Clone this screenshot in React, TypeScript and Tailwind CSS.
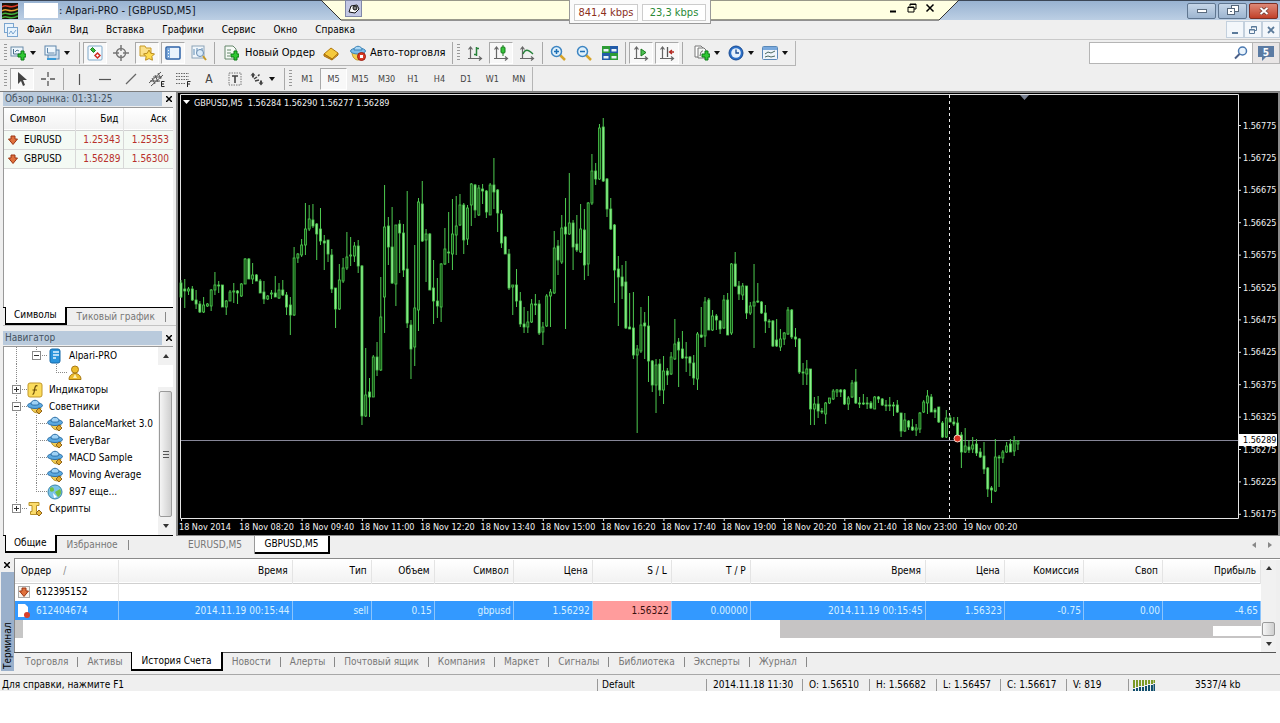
import type { ReactNode } from 'react';
import clsx from 'clsx';

type Candle = [number, number, number, number, 0 | 1];

// high, body top, body bottom, low, rising
const candles: Candle[] = [
  [280, 283, 297, 298, 0], [279, 289, 291, 308, 0], [287, 289, 291, 295, 1], [286, 289, 300, 301, 0], [290, 300, 304, 309, 0],
  [301, 304, 312, 313, 0], [297, 305, 312, 313, 1], [303, 304, 306, 307, 1], [289, 290, 306, 311, 1], [272, 285, 290, 295, 1],
  [281, 285, 286, 293, 0], [285, 285, 307, 307, 0], [300, 301, 307, 315, 1], [290, 292, 301, 301, 1], [283, 291, 292, 303, 1],
  [290, 291, 293, 304, 0], [283, 284, 296, 297, 1], [258, 259, 284, 284, 1], [258, 259, 279, 279, 0], [263, 275, 279, 284, 1],
  [274, 275, 281, 281, 0], [279, 281, 293, 293, 0], [281, 292, 299, 304, 0], [295, 296, 299, 300, 1], [290, 293, 294, 299, 1],
  [276, 293, 297, 297, 0], [283, 290, 298, 299, 1], [280, 290, 295, 296, 0], [292, 295, 307, 315, 0], [297, 305, 315, 335, 0],
  [247, 258, 315, 316, 1], [253, 254, 258, 263, 1], [239, 245, 255, 257, 1], [203, 229, 245, 255, 1], [205, 219, 229, 231, 1],
  [204, 220, 226, 228, 0], [223, 224, 234, 260, 0], [208, 229, 241, 245, 0], [235, 241, 243, 270, 0], [240, 240, 254, 262, 0],
  [249, 255, 289, 293, 0], [288, 288, 309, 328, 0], [264, 280, 309, 310, 1], [258, 268, 281, 283, 1], [232, 257, 268, 270, 1],
  [237, 255, 256, 266, 1], [242, 246, 256, 262, 1], [240, 246, 266, 273, 0], [265, 266, 416, 425, 0], [348, 395, 416, 417, 1],
  [378, 392, 397, 417, 0], [355, 357, 397, 397, 1], [342, 357, 370, 376, 0], [277, 317, 370, 371, 1], [185, 227, 297, 333, 1],
  [217, 226, 247, 265, 0], [207, 247, 283, 284, 0], [225, 225, 284, 306, 1], [220, 224, 233, 273, 0], [224, 233, 270, 277, 0],
  [191, 269, 323, 328, 0], [320, 325, 349, 379, 0], [245, 308, 347, 366, 1], [198, 202, 310, 331, 1], [181, 204, 241, 242, 0],
  [229, 234, 240, 282, 1], [233, 234, 290, 290, 0], [260, 288, 301, 324, 0], [278, 301, 306, 318, 0], [263, 264, 307, 322, 1],
  [228, 249, 264, 265, 1], [212, 252, 253, 263, 0], [199, 234, 254, 270, 1], [196, 226, 235, 255, 1], [194, 205, 225, 226, 1],
  [203, 205, 240, 254, 0], [205, 208, 239, 245, 1], [183, 184, 205, 226, 1], [184, 185, 210, 218, 0], [185, 188, 215, 216, 1],
  [184, 189, 191, 204, 0], [190, 191, 212, 218, 0], [183, 185, 215, 215, 1], [158, 185, 192, 209, 0], [189, 190, 213, 232, 0],
  [210, 214, 243, 248, 0], [236, 237, 254, 254, 0], [249, 254, 288, 290, 0], [285, 285, 287, 315, 1], [269, 285, 301, 307, 0],
  [292, 301, 324, 327, 0], [307, 324, 327, 333, 0], [311, 322, 327, 333, 1], [299, 304, 322, 323, 1], [294, 304, 305, 315, 0],
  [300, 304, 333, 335, 0], [322, 327, 332, 345, 1], [294, 296, 326, 327, 1], [289, 292, 296, 327, 1], [231, 248, 293, 294, 1],
  [240, 246, 260, 275, 0], [215, 228, 262, 264, 1], [198, 227, 234, 329, 0], [173, 223, 234, 235, 1], [220, 223, 247, 270, 0],
  [215, 244, 250, 252, 0], [204, 229, 252, 253, 1], [209, 230, 265, 280, 0], [202, 203, 264, 276, 1], [154, 171, 203, 205, 1],
  [163, 171, 179, 185, 0], [124, 128, 179, 180, 1], [118, 127, 181, 182, 0], [178, 179, 209, 217, 0], [198, 209, 229, 230, 0],
  [224, 225, 270, 303, 0], [256, 269, 277, 326, 0], [265, 277, 286, 299, 0], [261, 282, 328, 329, 0], [293, 327, 329, 329, 0],
  [292, 328, 355, 359, 0], [345, 349, 355, 433, 1], [307, 325, 351, 353, 1], [312, 323, 326, 359, 0], [296, 326, 361, 382, 0],
  [360, 361, 385, 392, 0], [359, 365, 385, 413, 1], [359, 364, 390, 396, 0], [356, 371, 390, 404, 1], [368, 371, 375, 385, 0],
  [352, 357, 374, 375, 1], [319, 344, 359, 360, 1], [338, 342, 350, 387, 0], [331, 349, 358, 359, 0], [342, 357, 358, 372, 0],
  [356, 357, 363, 376, 0], [355, 363, 378, 385, 0], [332, 334, 379, 390, 1], [307, 335, 337, 338, 0], [297, 302, 336, 347, 1],
  [298, 300, 330, 330, 0], [310, 316, 330, 331, 1], [314, 316, 320, 330, 0], [320, 321, 329, 334, 0], [295, 300, 328, 329, 1],
  [293, 300, 335, 335, 0], [263, 264, 333, 335, 1], [252, 264, 286, 287, 0], [281, 286, 294, 300, 0], [283, 286, 295, 300, 1],
  [286, 286, 313, 319, 0], [302, 306, 313, 315, 1], [264, 302, 306, 348, 1], [283, 301, 302, 303, 0], [301, 302, 313, 314, 0],
  [305, 313, 321, 333, 0], [319, 321, 322, 328, 0], [320, 321, 346, 347, 0], [319, 340, 346, 347, 0], [329, 339, 347, 351, 1],
  [332, 333, 339, 345, 1], [307, 310, 334, 335, 1], [309, 310, 337, 339, 0], [328, 337, 339, 347, 0], [338, 339, 372, 374, 0],
  [363, 372, 373, 385, 0], [360, 369, 374, 385, 1], [369, 369, 409, 425, 0], [397, 404, 409, 425, 1], [396, 404, 411, 418, 0],
  [408, 411, 412, 414, 0], [402, 403, 414, 424, 1], [398, 398, 403, 404, 1], [389, 391, 399, 400, 1], [389, 390, 392, 397, 1],
  [389, 390, 392, 397, 0], [389, 390, 404, 405, 0], [396, 398, 404, 410, 1], [380, 383, 397, 398, 1], [369, 382, 403, 404, 0],
  [397, 403, 404, 408, 0], [394, 403, 404, 405, 0], [397, 403, 404, 409, 0], [401, 403, 408, 409, 0], [396, 397, 409, 409, 1],
  [396, 397, 399, 403, 0], [398, 399, 405, 406, 0], [400, 405, 406, 411, 0], [397, 405, 406, 411, 0], [402, 405, 406, 416, 0],
  [400, 405, 412, 413, 0], [413, 413, 431, 437, 0], [413, 420, 431, 432, 1], [420, 421, 427, 430, 0], [419, 427, 430, 431, 0],
  [424, 428, 430, 436, 1], [412, 413, 429, 433, 1], [400, 402, 412, 413, 1], [390, 396, 403, 414, 1], [394, 397, 412, 412, 0],
  [408, 410, 412, 418, 0], [407, 407, 422, 423, 0], [421, 423, 437, 438, 0], [410, 418, 437, 438, 1], [415, 418, 422, 422, 0],
  [417, 422, 424, 426, 0], [417, 423, 437, 440, 0], [432, 435, 452, 468, 0], [428, 446, 452, 453, 1], [440, 447, 450, 453, 0],
  [437, 445, 449, 453, 1], [439, 444, 453, 456, 0], [448, 452, 457, 458, 0], [442, 456, 469, 474, 0], [467, 468, 489, 497, 0],
  [486, 488, 490, 503, 0], [439, 457, 491, 492, 1], [455, 457, 458, 487, 0], [450, 452, 458, 463, 1], [442, 446, 452, 453, 1],
  [439, 444, 452, 452, 0], [436, 441, 451, 456, 1], [440, 441, 444, 450, 1],
];

const prices = ['1.56775', '1.56725', '1.56675', '1.56625', '1.56575', '1.56525', '1.56475', '1.56425', '1.56375', '1.56325', '1.56275', '1.56225', '1.56175'];
const times = ['18 Nov 2014', '18 Nov 08:20', '18 Nov 09:40', '18 Nov 11:00', '18 Nov 12:20', '18 Nov 13:40', '18 Nov 15:00', '18 Nov 16:20', '18 Nov 17:40', '18 Nov 19:00', '18 Nov 20:20', '18 Nov 21:40', '18 Nov 23:00', '19 Nov 00:20'];

const menu = ['Файл', 'Вид', 'Вставка', 'Графики', 'Сервис', 'Окно', 'Справка'];
const periods = ['M1', 'M5', 'M15', 'M30', 'H1', 'H4', 'D1', 'W1', 'MN'];

const quotes = [
  { symbol: 'EURUSD', bid: '1.25343', ask: '1.25353' },
  { symbol: 'GBPUSD', bid: '1.56289', ask: '1.56300' },
];

const orderColumns = [
  { title: 'Ордер', width: 103 },
  { title: 'Время', width: 174 },
  { title: 'Тип', width: 79 },
  { title: 'Объем', width: 63 },
  { title: 'Символ', width: 79 },
  { title: 'Цена', width: 79 },
  { title: 'S / L', width: 79 },
  { title: 'T / P', width: 79 },
  { title: 'Время', width: 175 },
  { title: 'Цена', width: 79 },
  { title: 'Комиссия', width: 79 },
  { title: 'Своп', width: 79 },
  { title: 'Прибыль', width: 98 },
];
const closedOrder = ['2014.11.19 00:15:44', 'sell', '0.15', 'gbpusd', '1.56292', '1.56322', '0.00000', '2014.11.19 00:15:45', '1.56323', '-0.75', '0.00', '-4.65'];

const terminalTabs = ['Торговля', 'Активы', 'История Счета', 'Новости', 'Алерты', 'Почтовый ящик', 'Компания', 'Маркет', 'Сигналы', 'Библиотека', 'Эксперты', 'Журнал'];

function Svg({ children, size = 'w-4 h-4' }: { children: ReactNode; size?: string }) {
  return <svg viewBox="0 0 16 16" className={clsx('shrink-0', size)} fill="none" aria-hidden="true">{children}</svg>;
}

const Plus = () => <path d="M8 9h3V6h3v3h2v3h-2v3h-3v-3H8z" fill="#2fc832" stroke="#0b7a14" strokeWidth="1" />;
const Axes = () => <path d="M3.500 2v12M1 13.500h13M1.500 4.500l2-2.500 2 2.500M12 11.500l2.500 2-2.500 2" stroke="#666" strokeWidth="1.200" />;

const icons: Record<string, ReactNode> = {
  newChart: <Svg><rect x="1" y="2" width="12" height="9" fill="#eef6fc" stroke="#6b8ba8" /><path d="M3.500 4v5h8M5 7l2-2 2 1" stroke="#4a718f" /><Plus /></Svg>,
  profiles: <Svg><rect x="4" y="5" width="11" height="9" fill="#cfe0f0" stroke="#5f86ab" /><rect x="1" y="1" width="11" height="9" fill="#eef6fc" stroke="#5f86ab" /><path d="M3.500 3v5h7" stroke="#5f86ab" /><path d="M3 14h9" stroke="#3a9bd8" strokeWidth="2" /></Svg>,
  market: <Svg><rect x="1" y="1" width="14" height="14" rx="1" fill="#f6fbff" stroke="#7fa8c9" /><path d="M5.500 2.500l3 3-2 2-3-3z" fill="#34b93a" stroke="#187a1c" /><path d="M10.500 8l2.500 2.500-2.500 2.500L8 10.500z" fill="#fff" stroke="#cf2b20" strokeWidth="1.500" /></Svg>,
  cross: <Svg><circle cx="8" cy="8" r="4.500" stroke="#777" strokeWidth="1.500" /><path d="M8 0v6M8 10v6M0 8h6M10 8h6" stroke="#777" strokeWidth="1.500" /></Svg>,
  navigator: <Svg><path d="M1 3V1h5l1 2h5v8H1z" fill="#fbe08a" stroke="#c89b27" /><path d="M10 5l1.800 3.300 3.700.6-2.600 2.600.5 3.700L10 13.600l-3.400 1.600.5-3.700-2.600-2.600 3.700-.6z" fill="#ffdc50" stroke="#b98a1c" /></Svg>,
  terminal: <Svg><rect x="1" y="2" width="14" height="12" rx="1" fill="#eaf3fc" stroke="#2c62a6" strokeWidth="1.500" /><path d="M2 3h3v10H2z" fill="#79a9dd" /><path d="M3.500 5v1M3.500 8v1M3.500 11v1" stroke="#fff" /></Svg>,
  tester: <Svg><rect x="1" y="1" width="12" height="12" fill="#f0f6fb" stroke="#8ba3b8" /><path d="M3 4v6M6 3v5M9 4v3M11 3v5" stroke="#5e8cb5" /><circle cx="9" cy="8" r="3.500" fill="#d9eaf8" stroke="#6a8db0" /><path d="M12 11l3 4" stroke="#c89b27" strokeWidth="2" /></Svg>,
  order: <Svg><path d="M2 1h8l3 3v10H2z" fill="#f6faf6" stroke="#64866a" /><path d="M4 5h4M4 8h4M4 11h3" stroke="#64866a" /><Plus /></Svg>,
  book: <Svg><path d="M1 9l7-6 7 5-6 6z" fill="#f5c93c" stroke="#b37a10" /><path d="M1 9v2l8 4v-1zM9 15l6-5V8" fill="#d99a1c" stroke="#a86e0c" /></Svg>,
  auto: <Svg><path d="M2 7c0 5 3 8 6 8s6-3 6-8z" fill="#f4cf4f" stroke="#c09326" /><ellipse cx="8" cy="6" rx="7.500" ry="3" fill="#7cbbe8" stroke="#3c84b8" /><path d="M4 5c0-5 8-5 8 0z" fill="#a9d6f4" stroke="#3c84b8" /><circle cx="11.500" cy="11.500" r="4" fill="#d93a26" stroke="#9c1f12" /><rect x="10" y="10" width="3" height="3" fill="#fff" /></Svg>,
  bars: <Svg><Axes /><path d="M9.500 2v9M7 9.500h2.500M9.500 3.500H12" stroke="#27823a" strokeWidth="1.500" /></Svg>,
  candle: <Svg><Axes /><path d="M10 0v11" stroke="#187a1c" /><rect x="8" y="2" width="4" height="6" rx="1" fill="#37c43c" stroke="#187a1c" /></Svg>,
  line: <Svg><Axes /><path d="M4 9c2-5 5-5 10 0" stroke="#27823a" strokeWidth="1.300" /></Svg>,
  zoomIn: <Svg><path d="M10 10l5 5" stroke="#d7a42a" strokeWidth="2.500" /><circle cx="6.500" cy="6.500" r="5" fill="#dff0fb" stroke="#3d85c2" strokeWidth="1.500" /><path d="M6.500 4v5M4 6.500h5" stroke="#1d6fb5" strokeWidth="1.500" /></Svg>,
  zoomOut: <Svg><path d="M10 10l5 5" stroke="#d7a42a" strokeWidth="2.500" /><circle cx="6.500" cy="6.500" r="5" fill="#dff0fb" stroke="#3d85c2" strokeWidth="1.500" /><path d="M4 6.500h5" stroke="#1d6fb5" strokeWidth="1.500" /></Svg>,
  tile: <Svg><path d="M0 1h8v7H0zM8 8h8v7H8z" fill="#2c9b35" /><path d="M8 1h8v7H8zM0 8h8v7H0z" fill="#225ba8" /><path d="M1.500 4h5v2.500h-5zM9.500 4h5v2.500h-5zM1.500 11h5v2.500h-5zM9.500 11h5v2.500h-5z" fill="#e8f2f8" /></Svg>,
  scroll: <Svg><Axes /><path d="M8 4l5 3.500L8 11z" fill="#4fc255" stroke="#187a1c" /></Svg>,
  shift: <Svg><Axes /><path d="M8.500 2v10" stroke="#555" strokeWidth="1.300" /><path d="M15 7h-4M13 5l-2.500 2L13 9" stroke="#b3261e" strokeWidth="1.300" /></Svg>,
  indicators: <Svg><path d="M1 1h6l2 2v9H1z" fill="#fff" stroke="#777" /><path d="M4 3h6l2 2v8H4z" fill="#f4f7f4" stroke="#777" /><path d="M6 11c1-4 1-5 3-5" stroke="#555" /><Plus /></Svg>,
  clock: <Svg><circle cx="8" cy="8" r="7" fill="#2b6fc8" stroke="#174a92" /><circle cx="8" cy="8" r="4.800" fill="#e6f1fc" /><path d="M8 4.500V8h3" stroke="#174a92" strokeWidth="1.300" /></Svg>,
  template: <Svg><rect x="0.500" y="1.500" width="15" height="13" rx="1" fill="#eef5fb" stroke="#5a89b8" /><path d="M1 2h14v3H1z" fill="#79a9dd" /><path d="M3 9l3-2 3 1 4-2M3 12l3-1 3 1 4-1" stroke="#4b6a60" /></Svg>,
  pointer: <Svg><path d="M4 1v12l3-3 2 5 2-1-2-5h4z" fill="#444" /></Svg>,
  plain: <Svg><path d="M8 1v5M8 10v5M1 8h5M10 8h5M8 8h.1" stroke="#555" strokeWidth="1.300" /></Svg>,
  vline: <Svg><path d="M8.500 3v11" stroke="#555" strokeWidth="1.200" /></Svg>,
  hline: <Svg><path d="M2 8.500h12" stroke="#555" strokeWidth="1.200" /></Svg>,
  trend: <Svg><path d="M3 13L13 3" stroke="#666" strokeWidth="1.200" /></Svg>,
  channel: <Svg><path d="M0 12L12 1M2 15L14 4M3 7l3 6M6 4l3 7M9 2l3 6M1 10h10M4 6h9" stroke="#555" /><path d="M15.500 10.500h-3v5h3M12.500 13h2.500" stroke="#222" /></Svg>,
  fibo: <Svg><path d="M1 2.500h13M1 5.500h13M1 8.500h13M1 12.500h9" stroke="#666" strokeDasharray="1.500 1" /><path d="M15.500 10.500h-3V16M12.500 13h2.500" stroke="#222" /></Svg>,
  label: <Svg><rect x="2" y="2" width="12" height="12" stroke="#777" strokeDasharray="1.500 1" /><path d="M5 5h6M8 5v7" stroke="#444" strokeWidth="1.600" /></Svg>,
  arrows: <Svg><path d="M4 1.500l2.500 3H5v2H3v-2H1.500zM12 14.500l-2.500-3H11v-2h2v2h1.500z" fill="#444" /><path d="M5 8l3-2M6 10l4-1M9 5l1.500-1.500" stroke="#444" strokeWidth="1.500" /></Svg>,
};

function Caret() {
  return <svg viewBox="0 0 6 4" className="h-1 w-1.5 shrink-0" aria-hidden="true"><path d="M0 0h6L3 4z" fill="#111" /></svg>;
}

function Tool({ icon, label, caret, pressed }: { icon: string; label: string; caret?: boolean; pressed?: boolean }) {
  return (
    <button
      aria-label={label}
      className={clsx(
        'flex h-[22px] shrink-0 items-center gap-1 border',
        caret ? 'w-[34px]' : 'mx-px w-6 justify-center',
        pressed ? 'border-[#a9a9a9] border-r-white border-b-white bg-[#f8f8f8]' : 'border-transparent',
      )}
    >
      {icons[icon]}
      {caret && <Caret />}
    </button>
  );
}

const Divider = () => <span className="mx-0.5 h-[22px] w-px shrink-0 bg-[#a8a8a8]" />;
const Grip = () => <span className="mx-0.5 h-[18px] w-[3px] shrink-0 bg-[repeating-linear-gradient(#999_0_1px,#efefef_1px_3px)]" />;

function Ufo() {
  return (
    <Svg>
      <path d="M4 8c1 5 4 6 8 6l2-5z" fill="#f0cc55" stroke="#b8922a" />
      <ellipse cx="8" cy="6.500" rx="7.500" ry="3" fill="#5ba9e0" stroke="#2b6ea6" />
      <path d="M4 5c0-5 8-5 8 0 0 1.500-8 1.500-8 0z" fill="#9fd2f5" stroke="#2b6ea6" />
      <path d="M12 9l3 3-3 3-3-3z" fill="#e0a92e" stroke="#90641a" />
    </Svg>
  );
}

const treeIcons: Record<string, ReactNode> = {
  server: <Svg><rect x="3" y="1" width="10" height="14" rx="2" fill="#2a94dc" stroke="#1568a8" /><path d="M6 4h6M6 7h6M6 10h3" stroke="#e3f3ff" strokeWidth="1.300" /></Svg>,
  user: <Svg><circle cx="8" cy="4.500" r="3.500" fill="#edbd2c" stroke="#a87a14" /><path d="M2 14.500c0-8 12-8 12 0z" fill="#edbd2c" stroke="#a87a14" /><path d="M8 9l2 4H6z" fill="#fff2b8" /></Svg>,
  func: <Svg><rect x="1" y="1" width="14" height="14" rx="2" fill="#fbdc5c" stroke="#c29728" /><path d="M10.500 4c-2-1-2.500.5-3 4s-1 4.500-2 4M5.500 8h4.500" stroke="#6a4c08" strokeWidth="1.200" /></Svg>,
  ufo: <Ufo />,
  globe: <Svg><circle cx="8" cy="8" r="7" fill="#7cc3ea" stroke="#3a86a8" /><path d="M3 4c3-2 4 0 4 2s-3 2-4 1zM8 8l5-3c2 3 1 6-2 8z" fill="#74c043" /><path d="M6 9l4 4-3 1z" fill="#fff" /></Svg>,
  script: <Svg><path d="M2 1.500h10v3H9.500v6H12v3H3.500v-3H5v-6H2z" fill="#fbdc6c" stroke="#b8922a" /><path d="M12 9l3 3-3 3-3-3z" fill="#e8b63a" stroke="#90641a" /></Svg>,
};

interface Node {
  level: number;
  icon: string;
  label: string;
  toggle?: '+' | '-';
  last?: boolean;
}

const tree: Node[] = [
  { level: 1, icon: 'server', label: 'Alpari-PRO', toggle: '-', last: true },
  { level: 2, icon: 'user', label: '' },
  { level: 0, icon: 'func', label: 'Индикаторы', toggle: '+' },
  { level: 0, icon: 'ufo', label: 'Советники', toggle: '-' },
  { level: 1, icon: 'ufo', label: 'BalanceMarket 3.0' },
  { level: 1, icon: 'ufo', label: 'EveryBar' },
  { level: 1, icon: 'ufo', label: 'MACD Sample' },
  { level: 1, icon: 'ufo', label: 'Moving Average' },
  { level: 1, icon: 'globe', label: '897 еще...', last: true },
  { level: 0, icon: 'script', label: 'Скрипты', toggle: '+', last: true },
];

function TreeRow({ node }: { node: Node }) {
  const x = 12 + node.level * 20;
  return (
    <li className="flex h-[17px] items-center whitespace-nowrap">
      <svg width={x + 11} height="17" className="shrink-0" aria-hidden="true">
        <g stroke="#888" strokeDasharray="1 1">
          <path d={`M12.5 0V${node.level === 0 && node.last ? 8 : 17}`} />
          <path d={`M${x}.5 0V${node.last || node.level === 2 ? 8 : 17}M${x} 8.5h12`} />
        </g>
        {node.toggle && (
          <>
            <rect x={x - 3.5} y="4.5" width="8" height="8" fill="#fff" stroke="#8a8a8a" />
            <path d={node.toggle === '+' ? `M${x - 2} 8.5h5M${x}.5 6v5` : `M${x - 2} 8.5h5`} stroke="#333" />
          </>
        )}
      </svg>
      {treeIcons[node.icon]}
      <span className="pl-1.5">{node.label}</span>
    </li>
  );
}

function PanelTitle({ children }: { children: ReactNode }) {
  return (
    <div className="flex h-[14px] items-center">
      <h2 className="flex-1 bg-[#b9cadc] pl-0.5 leading-[14px] text-[#44525f]">{children}</h2>
      <button aria-label="Закрыть" className="flex w-[14px] items-center justify-center">
        <svg viewBox="0 0 6 6" className="h-1.5 w-1.5"><path d="M0 0l6 6M6 0L0 6" stroke="#000" strokeWidth="1.5" /></svg>
      </button>
    </div>
  );
}

function PanelTabs({ active, other }: { active: string; other: string }) {
  return (
    <div className="mr-[3px] flex h-[18px] items-stretch">
      <span className="w-0.5 border-t border-black" />
      <button className="border-b-2 border-l border-r-2 border-black bg-white px-2">{active}</button>
      <div className="flex flex-1 items-center border-t border-black text-[#777]">
        <button className="px-2.5">{other}</button>
        <span className="h-2.5 w-px bg-[#888]" />
      </div>
    </div>
  );
}

function DownMark() {
  return (
    <svg viewBox="0 0 10 10" className="h-2.5 w-2.5 shrink-0" aria-hidden="true">
      <path d="M3 1h4v3h2.500L5 9.500.5 4H3z" fill="#e0713c" stroke="#9a3412" />
    </svg>
  );
}

function Chart() {
  return (
    <svg viewBox="176 92 1104 444" className="block h-auto w-full font-['DejaVu_Sans_Condensed','DejaVu_Sans',sans-serif]" role="img" aria-label="GBPUSD,M5">
      <rect x="176" y="92" width="1104" height="444" fill="#8c8c8c" />
      <rect x="178" y="93" width="1100" height="442" fill="#000" />
      <path d="M180.500 94.500H1238.500V518.500H180.500z" fill="none" stroke="#e4e4e4" />
      <path d="M183 100h7l-3.500 4z" fill="#fff" />
      <text x="194" y="106" fill="#f2f2f2" fontSize="9" className="whitespace-pre">GBPUSD,M5  1.56284 1.56290 1.56277 1.56289</text>
      <path d="M1020 95h9l-4.500 5z" fill="#777f90" />
      <path d="M949.500 95V518" stroke="#e8e8e8" strokeDasharray="3 3" />
      <path d="M181 440.500H1238" stroke="#868698" />
      <g>
        {candles.map(([high, top, bottom, low, rising], i) => {
          const x = 181 + i * 3.77;
          return (
            <g key={i}>
              <path d={`M${x} ${high}V${low}`} stroke="#4ecb50" />
              <rect x={x - 1} y={top} width="2" height={Math.max(bottom - top, 1)} fill={rising ? '#0f4a0f' : '#90ee90'} stroke="#4ecb50" strokeWidth="0.8" />
            </g>
          );
        })}
      </g>
      <circle cx="957.500" cy="438.500" r="3.500" fill="#d8301f" stroke="#f7d6c8" />
      {prices.map((price, i) => (
        <g key={price}>
          <path d={`M1238 ${125.5 + i * 32.4}h3`} stroke="#e4e4e4" />
          <text x="1243" y={128.5 + i * 32.4} fill="#f2f2f2" fontSize="9">{price}</text>
        </g>
      ))}
      <rect x="1239" y="434" width="38" height="12" fill="#fff" />
      <text x="1243" y="443" fill="#000" fontSize="9">1.56289</text>
      {times.map((time, i) => (
        <g key={time}>
          <path d={`M${181.5 + i * 60.3} 518v3`} stroke="#e4e4e4" />
          <text x={179 + i * 60.3} y="530" fill="#f2f2f2" fontSize="9">{time}</text>
        </g>
      ))}
    </svg>
  );
}

function TitleBar() {
  return (
    <header className="relative flex h-5 items-center border-t border-[#3b4656] bg-gradient-to-b from-[#98b2d1] to-[#bccfe4] pl-0.5 pr-0.5">
      <svg viewBox="0 0 16 16" className="h-4 w-4" aria-hidden="true">
        <path d="M0 0h16v16H0z" fill="#1a1208" />
        <path d="M0 4c5-4 7 3 16-2" stroke="#e03a28" strokeWidth="1.500" fill="none" />
        <path d="M0 8c5-4 7 3 16-2" stroke="#e8a030" strokeWidth="1.500" fill="none" />
        <path d="M0 11.500c5-4 7 3 16-2M0 15c5-4 7 3 16-2" stroke="#3fae3a" strokeWidth="1.500" fill="none" />
      </svg>
      <span className="ml-1.5 mr-px h-[15px] w-[34px] bg-white" />
      <h1 className="text-[11px] text-[#10151c]">: Alpari-PRO - [GBPUSD,M5]</h1>
      <div className="ml-auto flex gap-0.5">
        <button aria-label="Свернуть" className="flex h-4 w-[29px] items-center justify-center rounded-xs border border-[#5f7690] bg-gradient-to-b from-[#c6d6e8] to-[#9db5d0]">
          <span className="h-1 w-2.5 border border-[#5a6b7e] bg-white" />
        </button>
        <button aria-label="Восстановить" className="flex h-4 w-[29px] items-center justify-center rounded-xs border border-[#5f7690] bg-gradient-to-b from-[#c6d6e8] to-[#9db5d0]">
          <svg viewBox="0 0 12 11" className="h-[11px] w-3" fill="#fff" stroke="#56677a"><rect x="4.500" y="0.500" width="7" height="6" /><rect x="0.500" y="3.500" width="7" height="6" /><path d="M3 6.500h2" /></svg>
        </button>
        <button aria-label="Закрыть" className="flex h-4 w-[29px] items-center justify-center rounded-xs border border-[#7c2f24] bg-gradient-to-b from-[#dd8877] to-[#c13f28]">
          <svg viewBox="0 0 10 8" className="h-2 w-2.5"><path d="M1.500 1l7 6M8.500 1l-7 6" stroke="#6b3a34" strokeWidth="3.500" /><path d="M1.500 1l7 6M8.500 1l-7 6" stroke="#fff" strokeWidth="2" /></svg>
        </button>
      </div>

      {/* remote session bar */}
      <div className="absolute -top-px left-1/2 flex h-[21px] w-[638px] -translate-x-1/2 items-start px-6">
        <svg viewBox="0 0 638 21" className="absolute inset-0 h-full w-full" aria-hidden="true">
          <path d="M0 0l20 20h598l20-20z" fill="#ffffe1" stroke="#333" />
        </svg>
        <div className="relative flex-1">
          <button aria-label="Закрепить" className="flex h-[17px] w-[17px] items-center justify-center border border-[#8088a8] bg-[#c3c8e4]">
            <svg viewBox="0 0 12 12" className="h-3 w-3" fill="#fff" stroke="#111"><path d="M1 9l2-6 6-1 2 4-4 4z" /><circle cx="7" cy="5" r="2" fill="#888" /></svg>
          </button>
        </div>
        <div className="relative flex h-6 w-[142px] gap-1 border border-[#999] border-t-0 bg-[#fafafa] px-1 pb-0.5 pt-1 text-[11px]">
          <span className="flex flex-1 items-center justify-center border border-[#ccc] bg-white text-[#8c2f1c]">841,4 kbps</span>
          <span className="flex flex-1 items-center justify-center border border-[#ccc] bg-white text-[#2a8a36]">23,3 kbps</span>
        </div>
        <div className="relative flex h-4 flex-1 items-center justify-end gap-2">
          <button aria-label="Свернуть"><svg viewBox="0 0 10 10" className="h-2.5 w-2.5"><path d="M1 8.500h6" stroke="#000" strokeWidth="2" /></svg></button>
          <button aria-label="Восстановить"><svg viewBox="0 0 10 10" className="h-2.5 w-2.5" fill="none" stroke="#000"><path d="M3 3V1h6v5H7M3 1.500h6" /><path d="M1 4h6v5H1zM1 4.500h6" /></svg></button>
          <button aria-label="Закрыть"><svg viewBox="0 0 10 10" className="h-2.5 w-2.5"><path d="M1.500 1.500l7 7M8.500 1.500l-7 7" stroke="#000" strokeWidth="1.500" /></svg></button>
        </div>
      </div>
    </header>
  );
}

function MenuBar() {
  return (
    <nav className="flex h-5 items-center border-b border-[#c9c9c9] pl-1">
      <svg viewBox="0 0 14 14" className="h-3.5 w-3.5" fill="#e8f3fc" stroke="#7ba5cf"><rect x="0.500" y="0.500" width="9" height="9" /><rect x="3.500" y="4.500" width="10" height="9" /><path d="M5 11l2-3 2 3 3-4" fill="none" /></svg>
      <div className="flex gap-[18px] pl-[9px]">
        {menu.map((item) => <button key={item}>{item}</button>)}
      </div>
      <div className="ml-auto flex text-[#5a7a9a]">
        <button aria-label="Свернуть окно" className="flex h-[17px] w-[18px] items-center justify-center border border-[#c3d0dd] bg-[#f3f7fb]"><svg viewBox="0 0 8 8" className="h-2 w-2"><path d="M1 7h6" stroke="currentColor" strokeWidth="2" /></svg></button>
        <button aria-label="Восстановить окно" className="flex h-[17px] w-[18px] items-center justify-center border border-[#c3d0dd] bg-[#f3f7fb]"><svg viewBox="0 0 8 8" className="h-2 w-2" fill="none" stroke="currentColor"><path d="M2.500 2.500v-2h5v4h-2M0.500 3.500h5v4h-5zM2.500 1h5M0.500 4h5" /></svg></button>
        <button aria-label="Закрыть окно" className="flex h-[17px] w-[18px] items-center justify-center border border-[#c3d0dd] bg-[#f3f7fb]"><svg viewBox="0 0 8 8" className="h-2 w-2"><path d="M1 1l6 6M7 1L1 7" stroke="currentColor" strokeWidth="1.800" /></svg></button>
      </div>
    </nav>
  );
}

function Toolbars() {
  return (
    <div className="border-b border-[#7d7d7d]">
      <div className="flex h-[26px] items-center">
        <div className="flex h-[25px] items-center border-b border-r border-[#b5b5b5] pl-0.5">
          <Grip />
          <Tool icon="newChart" label="Новый график" caret />
          <Tool icon="profiles" label="Профили" caret />
          <Divider />
          <Tool icon="market" label="Обзор рынка" pressed />
          <Tool icon="cross" label="Окно данных" />
          <Tool icon="navigator" label="Навигатор" pressed />
          <Tool icon="terminal" label="Терминал" pressed />
          <Tool icon="tester" label="Тестер" />
          <Divider />
          <button className="flex w-[101px] items-center gap-1.5 pl-1.5 text-[11px] whitespace-nowrap">{icons.order}Новый Ордер</button>
          <Tool icon="book" label="Редактор" />
          <button className="flex w-[106px] items-center gap-1 pl-1.5 text-[11px] whitespace-nowrap">{icons.auto}Авто-торговля</button>
          <Divider />
          <Grip />
          <Tool icon="bars" label="Бары" />
          <Tool icon="candle" label="Свечи" pressed />
          <Tool icon="line" label="Линия" />
          <Divider />
          <Tool icon="zoomIn" label="Увеличить" />
          <Tool icon="zoomOut" label="Уменьшить" />
          <Tool icon="tile" label="Окна мозаикой" />
          <Divider />
          <Tool icon="scroll" label="Автопрокрутка" pressed />
          <Tool icon="shift" label="Сдвиг графика" pressed />
          <Divider />
          <div className="flex pl-2">
            <Tool icon="indicators" label="Индикаторы" caret />
            <Tool icon="clock" label="Периоды" caret />
            <Tool icon="template" label="Шаблоны" caret />
          </div>
        </div>
        <div className="ml-auto flex h-[22px] w-[191px] border border-[#b5b5b5] bg-white">
          <input aria-label="Поиск" className="min-w-0 flex-1 px-1 outline-none" />
          <svg viewBox="0 0 14 14" className="mx-1 h-3.5 w-3.5 self-center" fill="none"><circle cx="8.500" cy="5" r="4" fill="#eaf4fd" stroke="#4a78b0" strokeWidth="1.500" /><path d="M5.500 8L1 12.500" stroke="#4a5f88" strokeWidth="2" /></svg>
          <button aria-label="Сообщения: 5" className="relative flex w-[27px] items-center justify-center border-l border-[#b5b5b5] bg-[#e9e6e6]">
            <svg viewBox="0 0 16 16" className="h-4 w-4"><path d="M0 1h16v11H8l-4 4v-4H0z" fill="#5b7ba3" /></svg>
            <span className="absolute inset-x-0 top-1 text-[10px] font-bold leading-3 text-white">5</span>
          </button>
        </div>
      </div>
      <div className="flex h-[25px] items-center">
        <div className="flex h-6 items-center border-r border-[#b5b5b5] pl-0.5">
          <Grip />
          <Tool icon="pointer" label="Курсор" pressed />
          <Tool icon="plain" label="Перекрестие" />
          <Divider />
          <Tool icon="vline" label="Вертикальная линия" />
          <Tool icon="hline" label="Горизонтальная линия" />
          <Tool icon="trend" label="Трендовая линия" />
          <Tool icon="channel" label="Канал" />
          <Tool icon="fibo" label="Фибоначчи" />
          <button className="mx-px w-6 text-[12px] text-[#444]">A</button>
          <Tool icon="label" label="Метка" />
          <Tool icon="arrows" label="Стрелки" caret />
          <Divider />
          <Grip />
          <div className="grid w-[238px] grid-cols-9 text-[9px] text-[#444]">
            {periods.map((period) => (
              <button key={period} className={clsx('h-[22px] border', period === 'M5' ? 'border-[#a9a9a9] border-r-white border-b-white bg-[#f8f8f8]' : 'border-transparent')}>{period}</button>
            ))}
          </div>
        </div>
      </div>
    </div>
  );
}

function MarketWatch() {
  return (
    <section className="flex h-[234px] flex-col border-b border-[#c4c4c4]">
      <PanelTitle>Обзор рынка: 01:31:25</PanelTitle>
      <div className="mt-px mr-[3px] flex-1 border-l border-t border-[#999] bg-white">
        <table className="w-full table-fixed border-collapse">
          <colgroup><col className="w-[71px]" /><col className="w-12" /><col className="w-[50px]" /></colgroup>
          <thead>
            <tr className="h-[22px] border-b border-[#d0d0d0] bg-gradient-to-b from-white to-[#f2f2f2]">
              <th className="border-r border-[#e2e2e2] pl-1.5 text-left font-normal">Символ</th>
              <th className="border-r border-[#e2e2e2] pr-1 text-right font-normal">Бид</th>
              <th className="pr-1.5 text-right font-normal">Аск</th>
            </tr>
          </thead>
          <tbody>
            {quotes.map((q) => (
              <tr key={q.symbol} className="h-[19px] border-b border-[#d8d8d8] bg-[#f4faf4] text-[#b8302a]">
                <td className="border-r border-[#d8d8d8] pl-1 text-black"><span className="flex items-center gap-1.5"><DownMark />{q.symbol}</span></td>
                <td className="border-r border-[#d8d8d8] pr-0.5 text-right">{q.bid}</td>
                <td className="pr-1 text-right">{q.ask}</td>
              </tr>
            ))}
          </tbody>
        </table>
      </div>
      <PanelTabs active="Символы" other="Тиковый график" />
    </section>
  );
}

function Navigator() {
  return (
    <section className="mt-[5px] flex flex-1 flex-col pb-0.5">
      <PanelTitle>Навигатор</PanelTitle>
      <div className="mt-px mr-[3px] flex flex-1 border-l border-t border-[#999] bg-white">
        <ul className="min-w-0 flex-1 overflow-hidden">
          {tree.map((node, i) => <TreeRow key={i} node={node} />)}
        </ul>
        <div className="flex w-[15px] flex-col items-center bg-[#f1f1f1]">
          <svg viewBox="0 0 6 4" className="my-[7px] h-1 w-1.5"><path d="M0 4h6L3 0z" fill="#333" /></svg>
          <span className="h-[22px] w-full bg-white" />
          <span className="mt-1 flex w-[13px] flex-1 items-center justify-center rounded-xs border border-[#9a9a9a] bg-gradient-to-r from-[#f5f5f5] to-[#cfcfcf]">
            <span className="h-[7px] w-1.5 border-y border-[#555] bg-[linear-gradient(#555,#555)] bg-[length:100%_1px] bg-center bg-no-repeat" />
          </span>
          <svg viewBox="0 0 6 4" className="my-[7px] h-1 w-1.5"><path d="M0 0h6L3 4z" fill="#333" /></svg>
        </div>
      </div>
      <PanelTabs active="Общие" other="Избранное" />
    </section>
  );
}

function Terminal() {
  return (
    <section className="mt-[3px] flex">
      <div className="flex w-[14px] flex-col items-center">
        <button aria-label="Закрыть" className="flex h-[14px] items-center"><svg viewBox="0 0 6 6" className="h-1.5 w-1.5"><path d="M0 0l6 6M6 0L0 6" stroke="#000" strokeWidth="1.5" /></svg></button>
        <h2 className="w-[13px] flex-1 rotate-180 bg-[#9ab0cb] pt-0.5 text-left leading-[13px] [writing-mode:vertical-rl]">Терминал</h2>
      </div>
      <div className="min-w-0 flex-1">
        <div className="flex border-l border-t border-[#8a8a8a] bg-white pt-px">
          <div className="min-w-0 flex-1">
            <table className="w-full table-fixed border-collapse">
              <colgroup>{orderColumns.map((c, i) => <col key={i} style={{ width: c.width }} />)}</colgroup>
              <thead>
                <tr className="h-[23px] border-b border-[#d0d0d0] bg-gradient-to-b from-white to-[#f2f2f2]">
                  {orderColumns.map((c, i) => (
                    <th key={i} className={clsx('border-r border-[#e4e4e4] font-normal', i ? 'pr-1 text-right' : 'pl-1.5 text-left')}>
                      {c.title}{i === 0 && <span className="pl-3 text-[#888]">/</span>}
                    </th>
                  ))}
                </tr>
              </thead>
              <tbody>
                <tr className="h-[18px]">
                  <td className="border-r border-[#e4e4e4] pl-[3px]">
                    <span className="flex items-center gap-1.5"><span className="flex h-3 w-3 items-center justify-center border border-[#aaa] bg-[#f8f4ee]"><DownMark /></span>612395152</span>
                  </td>
                  <td colSpan={12} />
                </tr>
                <tr className="h-[19px] bg-[#3399ff] text-[#d6f0ff]">
                  <td className="border-r border-[#8cc4fb] pl-[3px]">
                    <span className="flex items-center gap-1.5">
                      <svg viewBox="0 0 12 14" className="h-3.5 w-3"><path d="M0 0h7l3 3v10H0z" fill="#fff" /><circle cx="9" cy="11" r="3" fill="#d8402c" /></svg>
                      612404674
                    </span>
                  </td>
                  {closedOrder.map((value, i) => (
                    <td key={i} className={clsx('border-r border-[#8cc4fb] pr-0.5 text-right', i === 5 && 'bg-[#ff9c9c] text-[#3a1010]')}>{value}</td>
                  ))}
                </tr>
              </tbody>
            </table>
            <div className="flex h-[18px] justify-between">
              <span className="w-2 bg-[#c6c6c6]" />
              <span className="flex w-[481px] items-end justify-end bg-[#c6c4c4] pb-0.5">
                <span className="h-2.5 w-12 bg-white" />
              </span>
            </div>
            <div className="h-[14px]" />
          </div>
          <div className="flex w-[15px] flex-col items-center bg-[#f1f1f1]">
            <svg viewBox="0 0 6 4" className="my-1.5 h-1 w-1.5"><path d="M0 4h6L3 0z" fill="#333" /></svg>
            <span className="mt-auto h-[14px] w-[13px] rounded-xs border border-[#9a9a9a] bg-gradient-to-r from-[#f5f5f5] to-[#cfcfcf]" />
            <svg viewBox="0 0 6 4" className="my-1.5 h-1 w-1.5"><path d="M0 0h6L3 4z" fill="#333" /></svg>
          </div>
          <span className="w-1 bg-[#efefef]" />
        </div>
        <div className="flex h-[19px] items-stretch text-[#777]">
          <span className="w-0.5 border-t border-[#555]" />
          {terminalTabs.map((tab, i) => (
            tab === 'История Счета'
              ? <button key={tab} className="border-b-2 border-l border-r-2 border-black bg-white px-[9px] text-black">{tab}</button>
              : (
                <div key={tab} className="flex items-center border-t border-[#555]">
                  <button className="px-[9px]">{tab}</button>
                  {i !== 1 && <span className="h-2.5 w-px bg-[#888]" />}
                </div>
              )
          ))}
          <span className="mr-1 flex-1 border-t border-[#555]" />
        </div>
      </div>
    </section>
  );
}

function StatusBar() {
  return (
    <footer className="mt-[3px] flex h-[17px] items-end whitespace-nowrap border-t border-[#a8a8a8]">
      <span className="flex-1 pl-0.5">Для справки, нажмите F1</span>
      <span className="w-[109px] border-l border-[#999] pl-1">Default</span>
      <span className="w-24 border-l border-[#999] pl-1.5">2014.11.18 11:30</span>
      <span className="w-[67px] border-l border-[#999] pl-1.5">O: 1.56510</span>
      <span className="w-[67px] border-l border-[#999] pl-1.5">H: 1.56682</span>
      <span className="w-16 border-l border-[#999] pl-1.5">L: 1.56457</span>
      <span className="w-[66px] border-l border-[#999] pl-1.5">C: 1.56617</span>
      <span className="w-[62px] border-l border-[#999] pl-1.5">V: 819</span>
      <span className="flex w-[152px] items-center border-l border-[#999] pl-1">
        <svg viewBox="0 0 22 12" className="h-3 w-[22px]" aria-hidden="true">
          <path d="M1 1v8M4 1v7M7 1v6M10 1v6M13 1v5M16 1v4M19 1v4M21.500 1v3" stroke="#7c9a26" strokeWidth="2" />
          <path d="M1 10v2M4 9v3M7 8v4M10 8v4M13 7v5M16 6v6M19 6v6M21.500 5v7" stroke="#12506e" strokeWidth="2" />
        </svg>
        <span className="pl-10">3537/4 kb</span>
      </span>
    </footer>
  );
}

export default function App() {
  return (
    <div className="min-h-screen bg-white font-['DejaVu_Sans_Condensed','DejaVu_Sans',sans-serif] text-[10px] leading-3 text-black">
      <div className="bg-[#efefef]">
        <TitleBar />
        <MenuBar />
        <Toolbars />
        <main className="flex">
          <aside className="flex w-44 shrink-0 flex-col pl-[3px]">
            <MarketWatch />
            <Navigator />
          </aside>
          <div className="min-w-0 flex-1">
            <Chart />
            <div className="flex h-[19px] items-start">
              <button className="h-[18px] w-[79px] border-r border-[#999] text-[#777]">EURUSD,M5</button>
              <button className="h-[18px] w-[75px] border-b-2 border-r-2 border-black bg-white">GBPUSD,M5</button>
              <div className="ml-auto flex h-[18px] items-center gap-3 pr-2 text-[#777]">
                <button aria-label="Назад"><svg viewBox="0 0 4 6" className="h-1.5 w-1"><path d="M4 0v6L0 3z" fill="#888" /></svg></button>
                <button aria-label="Вперед"><svg viewBox="0 0 4 6" className="h-1.5 w-1"><path d="M0 0v6l4-3z" fill="#888" /></svg></button>
              </div>
            </div>
          </div>
        </main>
        <Terminal />
        <StatusBar />
      </div>
    </div>
  );
}
